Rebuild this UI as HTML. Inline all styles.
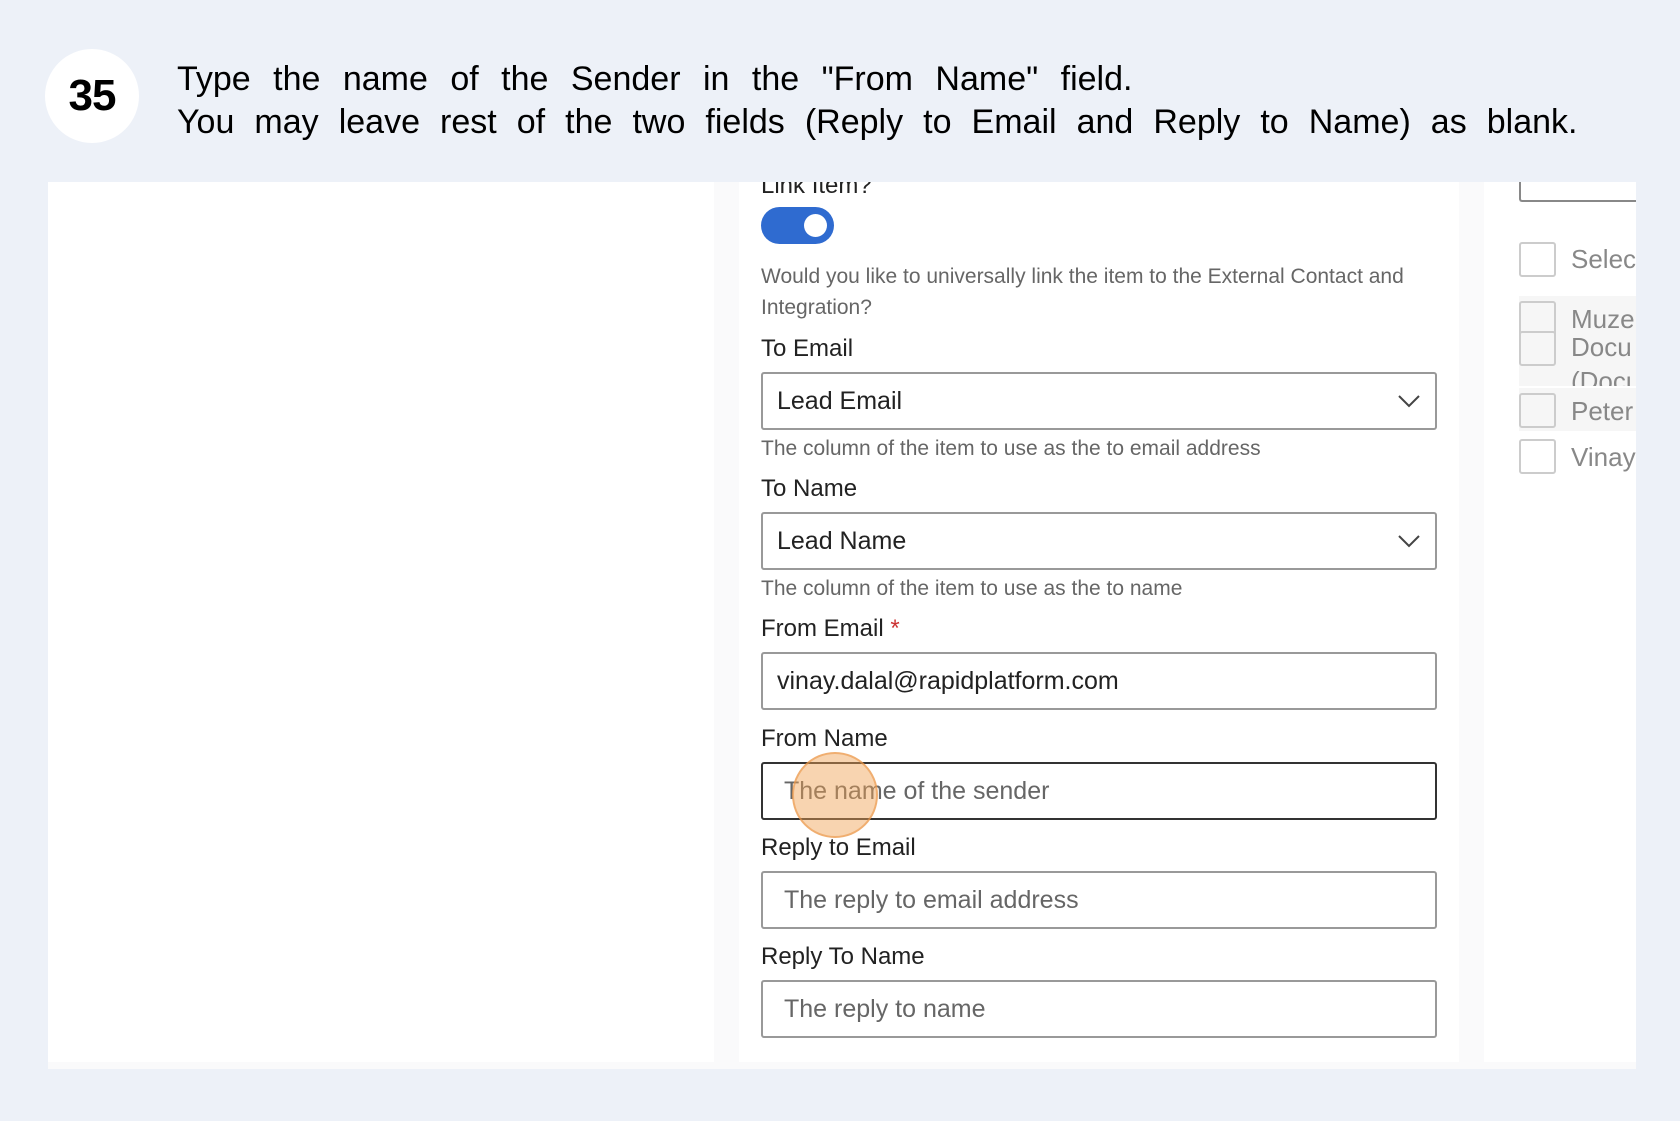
<!DOCTYPE html>
<html><head><meta charset="utf-8"><style>
*{margin:0;padding:0;box-sizing:border-box}
body{width:1680px;height:1121px;background:#edf1f8;position:relative;overflow:hidden;font-family:"Liberation Sans",sans-serif}
.a{position:absolute}
.circ{left:45px;top:49px;width:94px;height:94px;border-radius:50%;background:#fff;font-weight:bold;font-size:44px;line-height:94px;text-align:center;color:#000;letter-spacing:-1px}
.hd{left:177px;font-size:34px;color:#000;white-space:nowrap;word-spacing:13px}
.lbl{left:761px;font-size:24px;color:#222;white-space:nowrap}
.help{left:761px;font-size:21px;color:#666;white-space:nowrap}
.box{left:761px;width:676px;height:58px;border:2px solid #999;border-radius:3px;background:#fff;font-size:25px;line-height:54px;padding-left:14px;color:#222}
.ph{color:#666;padding-left:21px}
.cb{left:1519px;width:37px;height:35px;border:2px solid #ccc;border-radius:3px;background:#fff}
.rt{left:1571px;font-size:26px;color:#888;white-space:nowrap}
</style></head><body>
<div class="a" style="left:0;top:0;width:13px;height:22px;background:#fff"></div>

<div class="a" style="left:48px;top:182px;width:1588px;height:887px;background:#fff;overflow:hidden">
 <div class="a" style="left:666px;top:0;width:25px;height:887px;background:#fafafb"></div>
 <div class="a" style="left:1411px;top:0;width:25px;height:887px;background:#fafafb"></div>
 <div class="a" style="left:0;top:880px;width:1588px;height:7px;background:#fafafb"></div>
</div>

<div class="a lbl" style="top:172px">Link Item?</div>
<div class="a" style="left:0;top:0;width:1680px;height:182px;background:#edf1f8"></div>
<div class="a circ">35</div>
<div class="a hd" style="top:60px">Type the name of the Sender in the "From Name" field.</div>
<div class="a hd" style="top:103px;word-spacing:10.6px">You may leave rest of the two fields (Reply to Email and Reply to Name) as blank.</div>

<div class="a" style="left:761px;top:207px;width:73px;height:37px;border-radius:19px;background:#2f6bd0"></div>
<div class="a" style="left:804px;top:214px;width:23px;height:23px;border-radius:50%;background:#fff"></div>
<div class="a help" style="top:265px">Would you like to universally link the item to the External Contact and</div>
<div class="a help" style="top:296px">Integration?</div>
<div class="a lbl" style="top:335px">To Email</div>
<div class="a box" style="top:372px">Lead Email<svg class="a" style="right:14px;top:20px" width="24" height="14"><path d="M2 2l10 10 10-10" fill="none" stroke="#444" stroke-width="2"/></svg></div>
<div class="a help" style="top:437px">The column of the item to use as the to email address</div>
<div class="a lbl" style="top:475px">To Name</div>
<div class="a box" style="top:512px">Lead Name<svg class="a" style="right:14px;top:20px" width="24" height="14"><path d="M2 2l10 10 10-10" fill="none" stroke="#444" stroke-width="2"/></svg></div>
<div class="a help" style="top:577px">The column of the item to use as the to name</div>
<div class="a lbl" style="top:615px">From Email <span style="color:#c33">*</span></div>
<div class="a box" style="top:652px">vinay.dalal@rapidplatform.com</div>
<div class="a lbl" style="top:725px">From Name</div>
<div class="a box ph" style="top:762px;border-color:#333">The name of the sender</div>
<div class="a lbl" style="top:834px">Reply to Email</div>
<div class="a box ph" style="top:871px">The reply to email address</div>
<div class="a lbl" style="top:943px">Reply To Name</div>
<div class="a box ph" style="top:980px">The reply to name</div>
<div class="a" style="left:792px;top:752px;width:86px;height:86px;border-radius:50%;background:rgba(240,160,80,0.45);border:2px solid rgba(235,150,70,0.6)"></div>

<div class="a" style="left:1519px;top:182px;width:117px;height:20px;border:2px solid #888;border-top:none;border-right:none;border-radius:0 0 0 3px"></div>
<div class="a" style="left:1519px;top:296px;width:117px;height:90px;background:#f6f6f6"></div>
<div class="a" style="left:1519px;top:388px;width:117px;height:43px;background:#f6f6f6"></div>
<div class="a cb" style="top:242px"></div><div class="a rt" style="top:244px">Select</div>
<div class="a cb" style="top:301px;background:#f6f6f6"></div><div class="a cb" style="top:331px;background:#f6f6f6"></div>
<div class="a rt" style="top:304px">Muze</div><div class="a rt" style="top:332px">Docu</div><div class="a rt" style="top:366px;height:20px;overflow:hidden">(Docu</div>
<div class="a cb" style="top:393px;background:#f6f6f6"></div><div class="a rt" style="top:396px">Peter</div>
<div class="a cb" style="top:439px"></div><div class="a rt" style="top:442px">Vinay</div>
<div class="a" style="left:1636px;top:182px;width:44px;height:939px;background:#edf1f8"></div>
</body></html>
